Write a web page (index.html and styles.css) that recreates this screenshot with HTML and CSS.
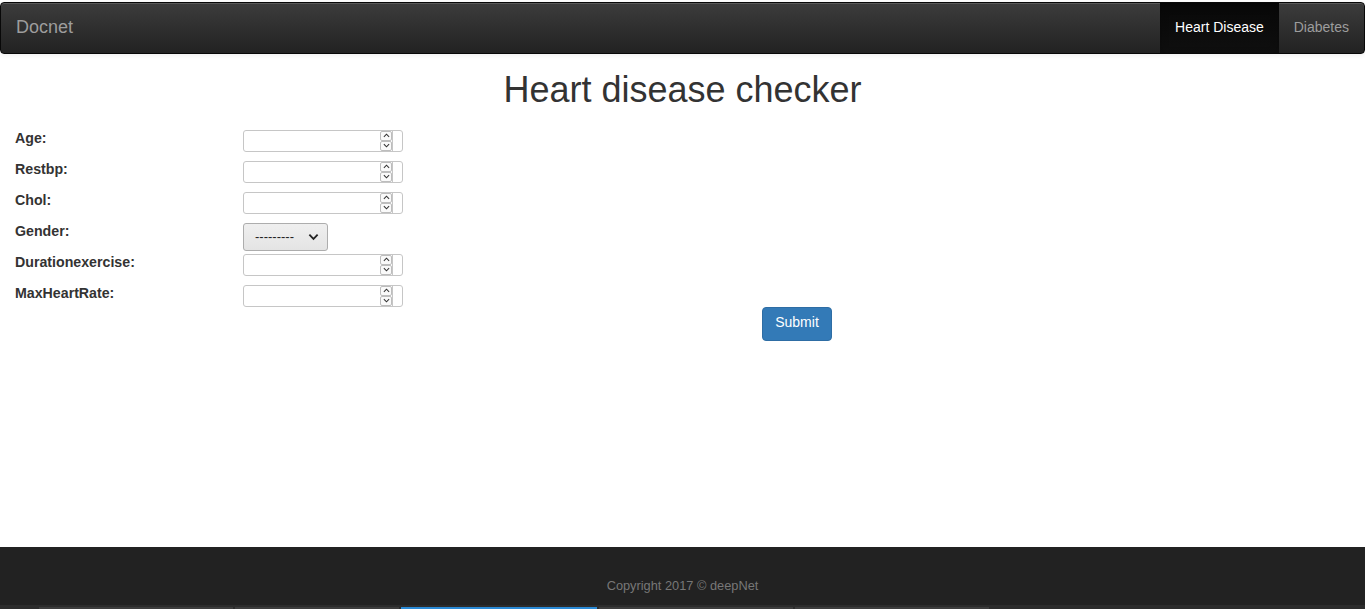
FILE: index.html
```html
<!DOCTYPE html>
<html>
<head>
<meta charset="utf-8">
<link rel="stylesheet" href="styles.css">
</head>
<body>
<div class="page">
  <nav class="navbar">
    <a class="brand">Docnet</a>
    <ul class="nav">
      <li class="active"><a>Heart Disease</a></li>
      <li><a>Diabetes</a></li>
    </ul>
  </nav>
  <main class="main">
    <h1 class="title">Heart disease checker</h1>
    <form class="form">
      <div class="rows">
        <label class="lbl">Age:</label>
        <div class="num"><span class="field"></span><span class="spin"><i class="up"><svg viewBox="0 0 8 5"><path d="M1 4 L4 1 L7 4"/></svg></i><i class="dn"><svg viewBox="0 0 8 5"><path d="M1 1 L4 4 L7 1"/></svg></i></span><span class="tail"></span></div>
        <label class="lbl">Restbp:</label>
        <div class="num"><span class="field"></span><span class="spin"><i class="up"><svg viewBox="0 0 8 5"><path d="M1 4 L4 1 L7 4"/></svg></i><i class="dn"><svg viewBox="0 0 8 5"><path d="M1 1 L4 4 L7 1"/></svg></i></span><span class="tail"></span></div>
        <label class="lbl">Chol:</label>
        <div class="num"><span class="field"></span><span class="spin"><i class="up"><svg viewBox="0 0 8 5"><path d="M1 4 L4 1 L7 4"/></svg></i><i class="dn"><svg viewBox="0 0 8 5"><path d="M1 1 L4 4 L7 1"/></svg></i></span><span class="tail"></span></div>
        <label class="lbl">Gender:</label>
        <div class="select"><span>---------</span><svg class="chev" viewBox="0 0 12 8"><path d="M1.5 1.5 L6 6 L10.5 1.5"/></svg></div>
        <label class="lbl">Durationexercise:</label>
        <div class="num"><span class="field"></span><span class="spin"><i class="up"><svg viewBox="0 0 8 5"><path d="M1 4 L4 1 L7 4"/></svg></i><i class="dn"><svg viewBox="0 0 8 5"><path d="M1 1 L4 4 L7 1"/></svg></i></span><span class="tail"></span></div>
        <label class="lbl">MaxHeartRate:</label>
        <div class="num"><span class="field"></span><span class="spin"><i class="up"><svg viewBox="0 0 8 5"><path d="M1 4 L4 1 L7 4"/></svg></i><i class="dn"><svg viewBox="0 0 8 5"><path d="M1 1 L4 4 L7 1"/></svg></i></span><span class="tail"></span></div>
      </div>
      <div class="actions"><button type="button" class="btn">Submit</button></div>
    </form>
  </main>
  <footer class="footer">Copyright 2017 © deepNet</footer>
  <div class="taskbar">
    <span class="tab t1"></span><span class="tab t2"></span><span class="tab t3 on"></span><span class="tab t4"></span><span class="tab t5"></span>
  </div>
</div>
</body>
</html>
```
FILE: styles.css
```css
* { box-sizing: border-box; }
html, body { margin: 0; padding: 0; }
body {
  font-family: "Liberation Sans", Arial, Helvetica, sans-serif;
  font-size: 14px;
  color: #333;
  background: #fff;
}
.page {
  height: 609px;
  display: flex;
  flex-direction: column;
  overflow: hidden;
}
.navbar {
  margin-top: 2px;
  height: 52px;
  flex: none;
  display: flex;
  justify-content: space-between;
  align-items: stretch;
  background: linear-gradient(#3c3c3c, #222);
  border: 1px solid #080808;
  border-radius: 4px;
  box-shadow: inset 0 1px 0 rgba(255,255,255,.15), 0 1px 5px rgba(0,0,0,.075);
}
.brand {
  color: #9d9d9d;
  font-size: 18px;
  line-height: 20px;
  padding: 14px 15px 15px 15px;
}
.nav {
  list-style: none;
  margin: 0;
  padding: 0;
  display: flex;
}
.nav li a {
  display: block;
  height: 100%;
  padding: 14px 15px 0 15px;
  line-height: 20px;
  color: #9d9d9d;
}
.nav li.active a {
  color: #fff;
  background: linear-gradient(#080808, #0f0f0f);
  box-shadow: inset 0 3px 9px rgba(0,0,0,.25);
}
.main { flex: 1; }
.title {
  margin: 16px 0 20px;
  text-align: center;
  font-size: 36px;
  font-weight: 500;
  line-height: 39.6px;
  color: #333;
}
.form { padding-left: 15px; }
.rows {
  display: grid;
  grid-template-columns: 228px 160px;
  grid-auto-rows: 22px;
  row-gap: 9px;
}
.lbl {
  font-weight: bold;
  font-size: 14.2px;
  line-height: 20px;
  margin-top: -2px;
}
.num {
  display: flex;
  width: 160px;
  height: 22px;
  border: 1px solid #c6c6c6;
  border-radius: 3px;
  background: #fff;
}
.field { flex: 1; }
.spin {
  width: 13px;
  display: flex;
  flex-direction: column;
  border-right: 1px solid #c6c6c6;
}
.spin i {
  flex: 1;
  display: flex;
  align-items: center;
  justify-content: center;
  border: 1px solid #bdbdbd;
  border-radius: 2px;
  background: #fafafa;
}
.spin i svg { width: 7px; height: 5px; }
.spin i path { fill: none; stroke: #333; stroke-width: 1.2; }
.tail { width: 9px; }
.select {
  width: 85px;
  height: 28px;
  display: flex;
  align-items: center;
  justify-content: space-between;
  padding: 0 8px 0 11px;
  background: linear-gradient(#efefef, #e4e4e4);
  border: 1px solid #adadad;
  border-radius: 3px;
  font-size: 13px;
  color: #222;
}
.chev { width: 11px; height: 8px; }
.chev path { fill: none; stroke: #222; stroke-width: 2; }
.actions { padding-left: 747px; }
.btn {
  font-family: inherit;
  font-size: 14px;
  color: #fff;
  background: #337ab7;
  border: 1px solid #2e6da4;
  border-radius: 4px;
  width: 70px;
  height: 34px;
  padding: 0 0 3px;
  line-height: 20px;
}
.footer {
  height: 58px;
  flex: none;
  background: #222;
  color: #777;
  font-size: 12.8px;
  line-height: 17px;
  text-align: center;
  padding-top: 30px;
}
.taskbar {
  height: 4px;
  flex: none;
  background: #2c2c2c;
  display: flex;
  align-items: flex-end;
  padding-left: 39px;
  gap: 2px;
}
.tab { height: 2px; width: 194px; background: #3d3d3d; }
.tab.t2 { width: 164px; }
.tab.t3 { width: 196px; }
.tab.on { background: #2a8ad6; }
```
